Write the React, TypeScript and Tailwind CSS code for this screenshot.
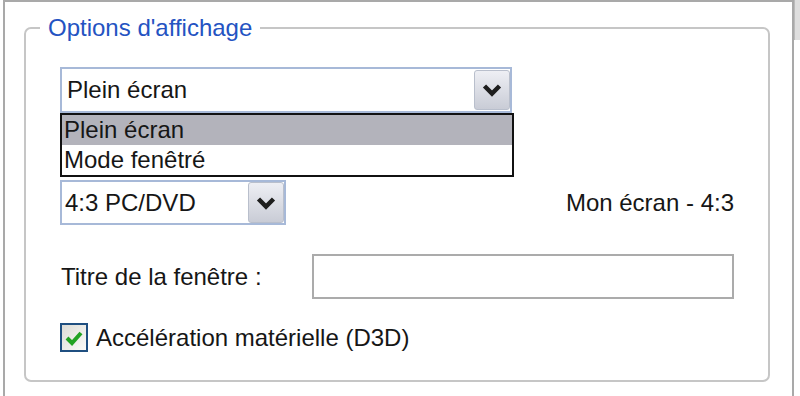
import React from 'react';

const font = { fontFamily: '"Liberation Sans", Arial, sans-serif' };

const ArrowButton = ({ h }: { h: string }) => (
  <div
    className={`ml-auto flex w-[36px] ${h} items-center justify-center rounded-[3px] border border-[#b9bfcc] bg-gradient-to-b from-[#eeeff4] to-[#c9ccd6]`}
  >
    <svg width="20" height="14" viewBox="0 0 20 14">
      <polyline
        points="2.5,3 10,10.5 17.5,3"
        fill="none"
        stroke="#1e1e1e"
        strokeWidth="4.5"
        strokeLinejoin="miter"
      />
    </svg>
  </div>
);

export default function App() {
  return (
    <div className="flex h-[396px] w-[800px] overflow-hidden bg-white pl-[3px] text-[#161616]" style={font}>
      <div className="h-[420px] w-[791px] border-l-2 border-r-2 border-t-2 border-[#a9a9a9]">
        {/* Options d'affichage */}
        <fieldset className="ml-[19px] mt-[12px] h-[368px] w-[746px] rounded-[7px] border-2 border-[#c6c6c6] pl-[34px] pr-[34px]">
          <legend className="-ml-[20px] px-[8px] text-[24px] leading-[28px] text-[#2453c2]">
            Options d'affichage
          </legend>

          <div className="relative mt-[25px] flex h-[46px] w-[452px] items-center border-2 border-[#a7b9d8] bg-white">
            <span className="pl-[5px] text-[24px] leading-none">Plein écran</span>
            <ArrowButton h="h-[40px]" />

            {/* open list */}
            <div className="absolute left-[-2px] top-[44px] z-10 w-[454px] border-2 border-[#111111] bg-white">
              <div className="h-[30px] bg-[#b3b3bb] pl-[2px] text-[24px] leading-[30px]">Plein écran</div>
              <div className="h-[30px] pl-[2px] text-[24px] leading-[30px]">Mode fenêtré</div>
            </div>
          </div>

          <div className="mt-[67px] flex items-center justify-between">
            <div className="flex h-[45px] w-[226px] items-center border-2 border-[#a7b9d8]">
              <span className="pl-[3px] text-[24px] leading-none">4:3 PC/DVD</span>
              <ArrowButton h="h-[41px]" />
            </div>
            <span className="text-[24px] leading-none">Mon écran - 4:3</span>
          </div>

          <div className="mt-[29px] flex items-center">
            <span className="pl-[1px] text-[24px] leading-none">Titre de la fenêtre :</span>
            <div className="ml-auto h-[45px] w-[422px] border-2 border-[#ababab] bg-white" />
          </div>

          <div className="mt-[24px] flex items-center gap-[8px]">
            <div className="flex h-[29px] w-[28px] items-center justify-center border-2 border-[#1f4f80] bg-gradient-to-br from-[#dcdcd6] to-[#fbfbf8]">
              <svg width="20" height="18" viewBox="0 0 20 18">
                <polyline
                  points="3,9 8,14 17,4"
                  fill="none"
                  stroke="#22a322"
                  strokeWidth="4"
                />
              </svg>
            </div>
            <span className="text-[24px] leading-none">Accélération matérielle (D3D)</span>
          </div>
        </fieldset>
      </div>

      <div className="w-[6px]">
        <div className="h-[40px] border-l border-[#bbbbbb] bg-[#dedede]" />
      </div>
    </div>
  );
}
